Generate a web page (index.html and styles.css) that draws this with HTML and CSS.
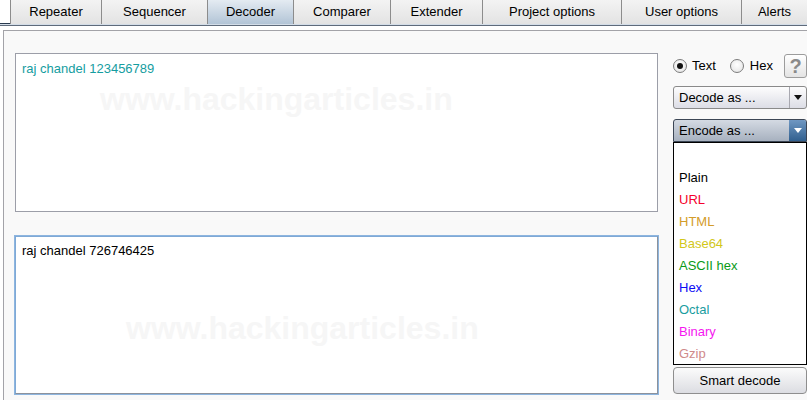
FILE: index.html
```html
<!DOCTYPE html>
<html>
<head>
<meta charset="utf-8">
<link rel="stylesheet" href="styles.css">
</head>
<body>
<div class="tabs">
  <div class="tab">Repeater</div>
  <div class="tab">Sequencer</div>
  <div class="tab active">Decoder</div>
  <div class="tab">Comparer</div>
  <div class="tab">Extender</div>
  <div class="tab">Project options</div>
  <div class="tab">User options</div>
  <div class="tab">Alerts</div>
</div>
<div class="rule"></div>
<div class="panel">
  <div class="main">
    <div class="box box-in">
      <div class="txt teal">raj chandel 123456789</div>
      <div class="wm wm1">www.hackingarticles.in</div>
    </div>
    <div class="box box-out">
      <div class="txt">raj chandel 726746425</div>
      <div class="wm wm2">www.hackingarticles.in</div>
    </div>
  </div>
  <div class="side">
    <div class="mode">
      <div class="radio"><span class="dot on"></span>Text</div>
      <div class="radio"><span class="dot"></span>Hex</div>
      <div class="help">?</div>
    </div>
    <div class="select decode">
      <span class="label">Decode as ...</span>
      <span class="arrow"><svg width="8" height="5" viewBox="0 0 8 5"><path d="M0 0H8L4 5Z" fill="#111"/></svg></span>
    </div>
    <div class="select encode">
      <span class="label">Encode as ...</span>
      <span class="arrow"><svg width="8" height="5" viewBox="0 0 8 5"><path d="M0 0H8L4 5Z" fill="#fff"/></svg></span>
    </div>
    <ul class="list">
      <li>&nbsp;</li>
      <li class="c-plain">Plain</li>
      <li class="c-url">URL</li>
      <li class="c-html">HTML</li>
      <li class="c-b64">Base64</li>
      <li class="c-ascii">ASCII hex</li>
      <li class="c-hex">Hex</li>
      <li class="c-oct">Octal</li>
      <li class="c-bin">Binary</li>
      <li class="c-gzip">Gzip</li>
    </ul>
    <div class="btn">Smart decode</div>
  </div>
</div>
</body>
</html>
```
FILE: styles.css
```css
* { box-sizing: border-box; }
html, body {
  margin: 0;
  padding: 0;
  width: 807px;
  height: 400px;
  overflow: hidden;
  background: #ffffff;
  font-family: "Liberation Sans", Arial, sans-serif;
  font-size: 13px;
  color: #000;
}
.tabs {
  display: grid;
  grid-template-columns: 91px 106px 86px 97px 92px 139px 120px 1fr;
  margin-left: 10px;
  height: 23px;
}
.tab {
  border-left: 1px solid #8c8c8c;
  background: linear-gradient(#f3f3f3, #e3e3e3);
  text-align: center;
  line-height: 24px;
  white-space: nowrap;
  color: #000;
}
.tab.active {
  background: linear-gradient(#e4ebf2, #b2c4d6);
}
.rule {
  height: 3px;
  border-top: 1px solid #2a3a4f;
  border-bottom: 1px solid #5f6b7b;
  background: #d3dde8;
}
.panel {
  margin: 4px 0 0 3px;
  border-top: 1px solid #a3a3a8;
  border-left: 1px solid #a3a3a8;
  background: #f9f9f9;
  height: 370px;
  display: flex;
  gap: 14px;
  padding: 22px 0 0 11px;
}
.main {
  width: 644px;
  display: flex;
  flex-direction: column;
}
.box {
  position: relative;
  background: #fff;
  width: 643px;
}
.box-in {
  height: 159px;
  border: 1px solid #9c9ea8;
}
.box-out {
  margin-top: 24px;
  height: 158px;
  border: 1px solid #8c929c;
  border-top-color: #7fa9d6;
  border-left-color: #7fa9d6;
  box-shadow: 0 0 0 1px #8db5df;
}
.txt {
  position: relative;
  z-index: 1;
  padding: 7px 0 0 6px;
  line-height: 15px;
  font-size: 13px;
}
.box-out .txt { padding-top: 6px; }
.teal { color: #159d9f; }
.wm {
  position: absolute;
  font-size: 32px;
  font-weight: bold;
  line-height: 32px;
  color: #f6f6f6;
  white-space: nowrap;
}
.wm1 { left: 84px; top: 29px; }
.wm2 { left: 110px; top: 75px; }
.side {
  width: 134px;
  padding-top: 1px;
  display: flex;
  flex-direction: column;
}
.mode {
  display: flex;
  align-items: center;
  height: 23px;
}
.radio {
  display: flex;
  align-items: center;
  gap: 5px;
  margin-right: 14px;
}
.radio:nth-child(2) { margin-right: 0; gap: 6px; }
.dot {
  width: 14px;
  height: 14px;
  border-radius: 50%;
  border: 1px solid #7c7c7c;
  background: radial-gradient(circle at 50% 40%, #ffffff, #e2e2e2);
  display: flex;
  align-items: center;
  justify-content: center;
}
.dot.on::after {
  content: "";
  width: 6px;
  height: 6px;
  border-radius: 50%;
  background: #111;
}
.help {
  margin-left: auto;
  width: 23px;
  height: 24px;
  border: 1px solid #9c9c9c;
  border-radius: 3px;
  background: linear-gradient(#ffffff, #e4e4e4);
  color: #8a8a8a;
  font-weight: bold;
  font-size: 20px;
  line-height: 22px;
  text-align: center;
}
.select {
  height: 23px;
  display: flex;
  align-items: center;
  border-radius: 3px;
}
.select .label {
  flex: 1;
  padding-left: 5px;
}
.select .arrow {
  width: 17px;
  height: 100%;
  display: flex;
  align-items: center;
  justify-content: center;
}
.decode {
  margin-top: 9px;
  border: 1px solid #8a8a8a;
  background: linear-gradient(#fdfdfd, #dcdde6);
}
.decode .arrow {
  border-left: 1px solid #a8a8b0;
}
.encode {
  margin-top: 10px;
  border: 1px solid #3c4655;
  border-radius: 3px 3px 0 0;
  background: linear-gradient(#d4dae3, #a7b1bf);
}
.encode .arrow {
  background: linear-gradient(#6f97c2, #31608f);
  border-radius: 0 2px 0 0;
}
.list {
  list-style: none;
  margin: 0;
  padding: 2px 0 0;
  height: 223px;
  border: 1px solid #000;
  background: #fff;
}
.list li {
  height: 22px;
  line-height: 22px;
  padding-left: 5px;
}
.c-plain { color: #000; }
.c-url { color: #f5002c; }
.c-html { color: #d39c2a; }
.c-b64 { color: #d2c71a; }
.c-ascii { color: #099a17; }
.c-hex { color: #0c0cf5; }
.c-oct { color: #1a9da0; }
.c-bin { color: #f515f0; }
.c-gzip { color: #cf8a8a; }
.btn {
  margin-top: 2px;
  height: 27px;
  border: 1px solid #8e8e8e;
  border-radius: 4px;
  background: linear-gradient(#fbfbfb, #dcdde2);
  text-align: center;
  line-height: 25px;
  font-size: 13px;
}
```
